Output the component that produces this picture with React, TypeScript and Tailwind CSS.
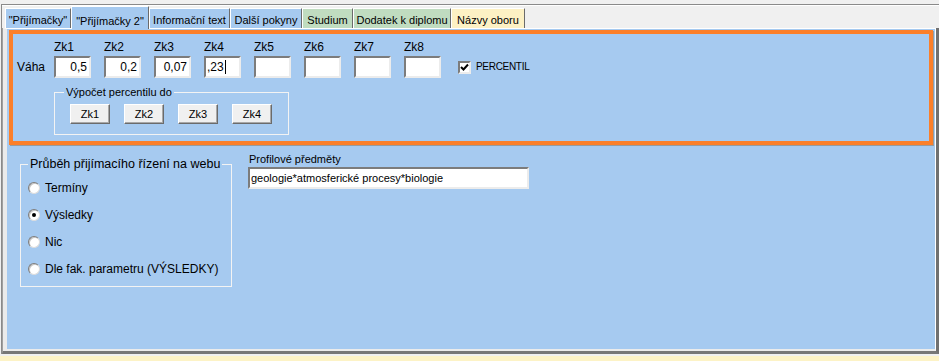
import React from "react";

const tabs = [
  { label: '"Přijímačky"', cls: "w-[66px] h-[20px] pt-[5px] bg-[#a6caf0]" },
  { label: '"Přijímačky 2"', cls: "w-[78px] h-[23px] pt-[8px] bg-[#a6caf0] -mb-[1px] z-10" },
  { label: "Informační text", cls: "w-[81px] h-[20px] pt-[5px] bg-[#a6caf0]" },
  { label: "Další pokyny", cls: "w-[72px] h-[20px] pt-[5px] bg-[#a6caf0]" },
  { label: "Studium", cls: "w-[51px] h-[20px] pt-[5px] bg-[#c0dcc0]" },
  { label: "Dodatek k diplomu", cls: "w-[98px] h-[20px] pt-[5px] bg-[#c0dcc0]" },
  { label: "Názvy oboru", cls: "w-[74px] h-[20px] pt-[5px] bg-[#fdf1c4]" },
];

const weights = [
  { label: "Zk1", value: "0,5" },
  { label: "Zk2", value: "0,2" },
  { label: "Zk3", value: "0,07" },
  { label: "Zk4", value: ",23", caret: true },
  { label: "Zk5", value: "" },
  { label: "Zk6", value: "" },
  { label: "Zk7", value: "" },
  { label: "Zk8", value: "" },
];

const radios = [
  { label: "Termíny", checked: false },
  { label: "Výsledky", checked: true },
  { label: "Nic", checked: false },
  { label: "Dle fak. parametru (VÝSLEDKY)", checked: false },
];

const sunken =
  "bg-white border-2 border-t-[#7c7c7c] border-l-[#7c7c7c] border-r-[#ececec] border-b-[#ececec]";

function WeightField({ label, value, caret }: { label: string; value: string; caret?: boolean }) {
  return (
    <div className="flex flex-col w-[50px]">
      <span className="text-[12px] leading-[14px] h-[14px]">{label}</span>
      <div
        className={`mt-[2px] w-[37px] h-[22px] flex items-center text-[12px] leading-[14px] ${sunken} ${
          caret ? "justify-start pl-[1px]" : "justify-end pr-[2px]"
        }`}
      >
        <span>{value}</span>
        {caret && <span className="ml-[1px] w-[1px] h-[14px] bg-black" />}
      </div>
    </div>
  );
}

function Radio({ label, checked }: { label: string; checked: boolean }) {
  return (
    <div className="h-[27px] flex items-center gap-[5px]">
      <div className="w-[12px] h-[12px] rounded-full bg-white border border-t-[#7c7c7c] border-l-[#7c7c7c] border-r-[#dcdcdc] border-b-[#dcdcdc] shadow-[inset_1px_1px_0_#c4c4c4] flex items-center justify-center">
        {checked && <div className="w-[4px] h-[4px] rounded-full bg-black" />}
      </div>
      <span className="text-[12px] leading-[14px]">{label}</span>
    </div>
  );
}

export default function App() {
  return (
    <div className="w-[939px] h-[361px] bg-[#f0f0f0] overflow-hidden text-black font-['Liberation_Sans',Arial,sans-serif]">
      <div className="mt-[4px] ml-[1px] w-[938px] border-t border-l border-[#8a8a8a]">
        {/* tab strip */}
        <div className="h-[23px] border-t border-white flex items-end pl-[3px]">
          {tabs.map((t) => (
            <div
              key={t.label}
              className={`relative ${t.cls} border-t border-l border-white border-r border-r-[#6b6b6b] text-[11px] leading-[13px] text-center whitespace-nowrap`}
            >
              {t.label}
            </div>
          ))}
        </div>

        {/* panel */}
        <div className="border-l border-[#a0a0a0] border-r-[3px] border-r-[#707070] border-b-[3px] border-b-[#777777]">
          <div className="h-[323px] bg-[#a6caf0] border-t border-t-white border-l-[4px] border-l-[#ebebeb] border-r border-r-white border-b-[2px] border-b-[#ebebeb]">
            {/* orange frame */}
            <div className="ml-[2px] mt-[1px] w-[924px] h-[115px] border-4 border-[#fb7f2a] shadow-[1px_1px_0_#9a9a9a]">
              <div className="flex pt-[6px]">
                <div className="ml-[4px] w-[37px] self-end h-[22px] flex items-center text-[12px]">Váha</div>
                {weights.map((w) => (
                  <WeightField key={w.label} {...w} />
                ))}
                <div className="ml-[4px] self-end h-[22px] flex items-center gap-[5px]">
                  <div className="w-[13px] h-[13px] bg-white border-2 border-t-[#7c7c7c] border-l-[#7c7c7c] border-r-[#ececec] border-b-[#ececec] flex items-center justify-center">
                    <svg width="9" height="9" viewBox="0 0 9 9">
                      <path d="M1 4 L3.5 6.5 L8 1.5" fill="none" stroke="black" strokeWidth="2" />
                    </svg>
                  </div>
                  <span className="text-[10px] leading-[12px] tracking-[-0.3px]">PERCENTIL</span>
                </div>
              </div>

              <fieldset className="ml-[41px] mt-[8px] w-[235px] border border-[#f3f3f3] pb-[10px]">
                <legend className="ml-[9px] px-[2px] text-[11px] leading-[13px]">Výpočet percentilu do</legend>
                <div className="mt-[5px] ml-[15px] flex gap-[14px]">
                  {["Zk1", "Zk2", "Zk3", "Zk4"].map((b) => (
                    <div
                      key={b}
                      className="w-[40px] h-[20px] bg-[#f0f0f0] border border-t-white border-l-white border-r-[#6b6b6b] border-b-[#6b6b6b] shadow-[inset_-1px_-1px_0_#a8a8a8] flex items-center justify-center text-[11px]"
                    >
                      {b}
                    </div>
                  ))}
                </div>
              </fieldset>
            </div>

            {/* lower section */}
            <div className="flex">
              <fieldset className="ml-[13px] mt-[12px] w-[212px] border border-[#f3f3f3] pb-[4px] pl-[7px] pt-[3px]">
                <legend className="px-[2px] text-[12.5px] leading-[14px]">Průběh přijímacího řízení na webu</legend>
                {radios.map((r) => (
                  <Radio key={r.label} {...r} />
                ))}
              </fieldset>

              <div className="ml-[16px] mt-[8px] flex flex-col">
                <span className="pl-[1px] text-[11px] leading-[13px]">Profilové předměty</span>
                <div className={`mt-[1px] w-[281px] h-[22px] flex items-center pl-[1px] text-[11px] ${sunken}`}>
                  geologie*atmosferické procesy*biologie
                </div>
              </div>
            </div>
          </div>
        </div>
      </div>
      <div className="mt-[2px] h-[5px] bg-[#fdf3c6]" />
    </div>
  );
}
